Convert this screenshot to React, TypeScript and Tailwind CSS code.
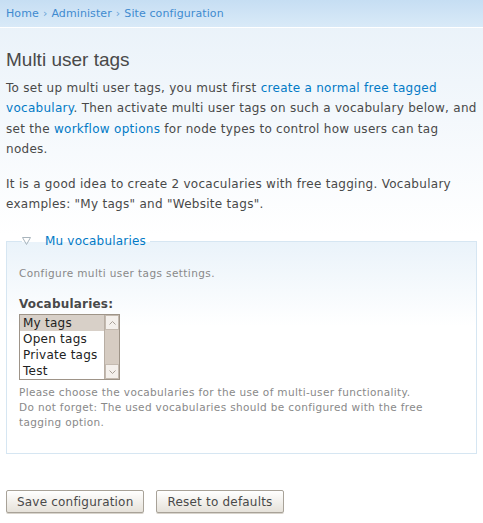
import React from "react";

const VOCABS = ["My tags", "Open tags", "Private tags", "Test"];

function Listbox() {
  return (
    <div className="flex h-[66px] w-[101px] border border-[#9e9488] bg-white">
      <div className="flex-1 overflow-hidden">
        {VOCABS.map((v, i) => (
          <div
            key={v}
            className={
              "h-[16px] pl-[3px] text-[12px] leading-[16px] tracking-[0.25px] text-[#222] whitespace-nowrap " +
              (i === 0 ? "bg-[#d8d0c8]" : "")
            }
          >
            {v}
          </div>
        ))}
      </div>
      <div className="flex w-[15px] flex-col border-l border-[#b8aea4] bg-[#d6ccc2]">
        <div className="flex h-[15px] items-center justify-center border border-[#c4bab0] bg-[#f4f0ec]">
          <svg width="7" height="4" viewBox="0 0 7 4">
            <path d="M0.5 3.5 L3.5 0.5 L6.5 3.5" fill="none" stroke="#a8a098" strokeWidth="1" />
          </svg>
        </div>
        <div className="flex-1" />
        <div className="flex h-[15px] items-center justify-center border border-[#c4bab0] bg-[#f4f0ec]">
          <svg width="7" height="4" viewBox="0 0 7 4">
            <path d="M0.5 0.5 L3.5 3.5 L6.5 0.5" fill="none" stroke="#a8a098" strokeWidth="1" />
          </svg>
        </div>
      </div>
    </div>
  );
}

function Button({ children }: { children: React.ReactNode }) {
  return (
    <button className="h-[23px] rounded-[2px] border border-[#a8a298] bg-gradient-to-b from-white to-[#e6e2da] px-[10px] text-[12px] leading-[20px] tracking-[0.2px] text-[#494949] shadow-[0_1px_0_#d8d4cc]">
      {children}
    </button>
  );
}

export default function App() {
  return (
    <div
      className="min-h-[523px] bg-gradient-to-b from-[#e8f1f9] via-white via-[45%] to-white text-[#494949]"
      style={{ fontFamily: '"DejaVu Sans", Verdana, sans-serif' }}
    >
      <div className="h-[28px] border-b border-white bg-gradient-to-b from-[#c6def3] to-[#d9eaf8] pl-[6px] text-[11px] leading-[27px] tracking-[0.1px] text-[#3f8bd0]">
        <a>Home</a>
        <span className="mx-[4px] text-[#6aa4d8]">›</span>
        <a>Administer</a>
        <span className="mx-[4px] text-[#6aa4d8]">›</span>
        <a>Site configuration</a>
      </div>

      <div className="px-[6px]">
        <h2
          className="mt-[20px] text-[19px] leading-[24px] text-[#494949]"
          style={{ fontFamily: '"Liberation Sans", Arial, sans-serif' }}
        >
          Multi user tags
        </h2>

        <p className="mt-[6px] text-[12px] leading-[20.4px] tracking-[0.28px]">
          To set up multi user tags, you must first{" "}
          <a className="text-[#027ac6]">create a normal free tagged vocabulary</a>. Then activate
          multi user tags on such a vocabulary below, and set the{" "}
          <a className="text-[#027ac6]">workflow options</a> for node types to control how users can
          tag nodes.
        </p>
        <p className="mt-[14px] text-[12px] leading-[20.4px] tracking-[0.28px]">
          It is a good idea to create 2 vocacularies with free tagging. Vocabulary examples: "My
          tags" and "Website tags".
        </p>

        <fieldset className="mt-[19px] h-[221px] border border-[#d6e6f2] bg-gradient-to-b from-[#eaf3fa] to-white to-[40%] px-[12px]">
          <legend className="ml-[3px] flex items-center pr-[4px] text-[12px] leading-[16px] tracking-[0.2px]">
            <svg width="9" height="8" viewBox="0 0 9 8" className="mr-[14px]">
              <path d="M0.5 0.5 H8.5 L4.5 7.5 Z" fill="none" stroke="#a8b4bc" strokeWidth="1" />
            </svg>
            <a className="text-[#027ac6]">Mu vocabularies</a>
          </legend>

          <div className="mt-[17px] text-[10.5px] leading-[15px] tracking-[0.4px] text-[#898989]">
            Configure multi user tags settings.
          </div>

          <div className="mt-[16px] text-[12px] font-bold leading-[15px] tracking-[0.2px] text-[#494949]">
            Vocabularies:
          </div>
          <div className="mt-[2px]">
            <Listbox />
          </div>
          <div className="mt-[5px] text-[10.5px] leading-[15px] tracking-[0.35px] text-[#898989]">
            Please choose the vocabularies for the use of multi-user functionality.
            <br />
            Do not forget: The used vocabularies should be configured with the free tagging option.
          </div>
        </fieldset>

        <div className="mt-[36px] flex gap-[12px]">
          <Button>Save configuration</Button>
          <Button>Reset to defaults</Button>
        </div>
      </div>
    </div>
  );
}
